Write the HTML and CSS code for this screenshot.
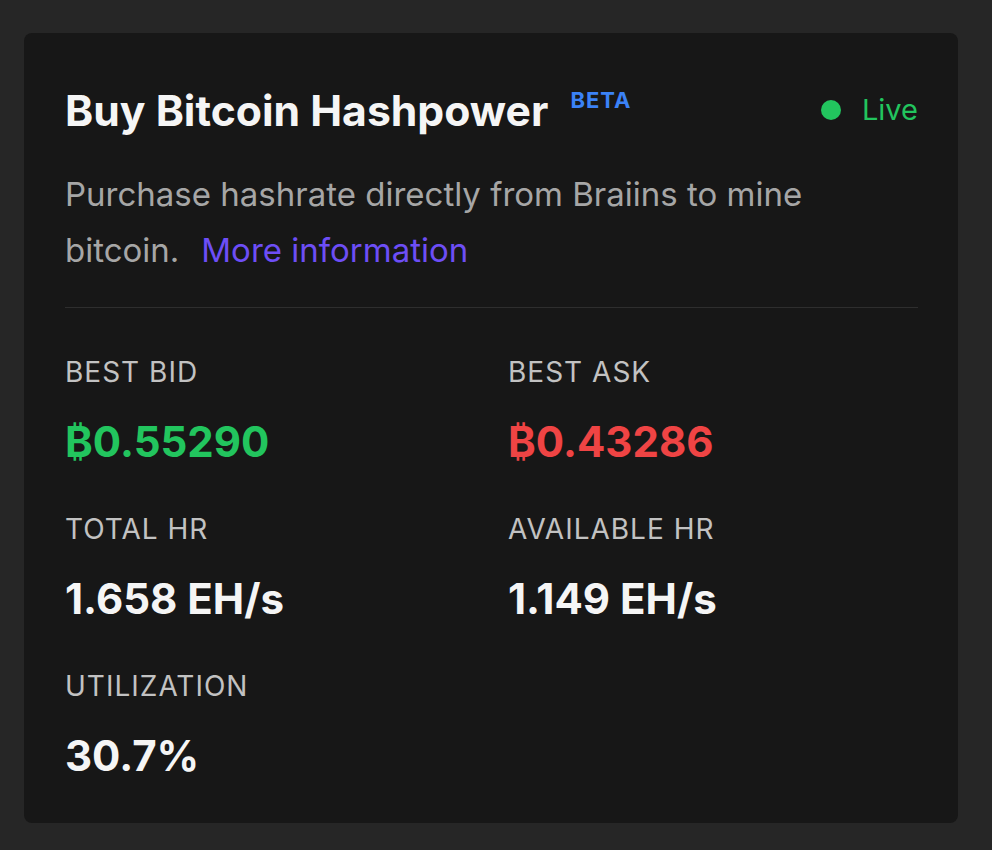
FILE: index.html
```html
<!DOCTYPE html>
<html>
<head>
<meta charset="utf-8">
<link rel="stylesheet" href="styles.css">
</head>
<body>
<div class="card">
  <div class="header">
    <h1 class="title">Buy Bitcoin Hashpower<span class="beta">BETA</span></h1>
    <div class="status"><span class="dot"></span><span class="live">Live</span></div>
  </div>
  <p class="desc">Purchase hashrate directly from Braiins to mine bitcoin.<a class="more" href="#">More information</a></p>
  <div class="divider"></div>
  <div class="stats">
    <div class="stat">
      <div class="label">BEST BID</div>
      <div class="value bid">₿0.55290</div>
    </div>
    <div class="stat">
      <div class="label">BEST ASK</div>
      <div class="value ask">₿0.43286</div>
    </div>
    <div class="stat">
      <div class="label">TOTAL HR</div>
      <div class="value">1.658 EH/s</div>
    </div>
    <div class="stat">
      <div class="label">AVAILABLE HR</div>
      <div class="value">1.149 EH/s</div>
    </div>
    <div class="stat">
      <div class="label">UTILIZATION</div>
      <div class="value">30.7%</div>
    </div>
  </div>
</div>
</body>
</html>
```

FILE: styles.css
```css
html, body {
  margin: 0;
  background: #262626;
}
body {
  padding: 33px 34px 0 24px;
  font-family: "Inter", "Noto Sans", sans-serif;
}
.card {
  background: #171717;
  border-radius: 8px;
  padding: 50px 40px 40px 41px;
  height: 790px;
  box-sizing: border-box;
}
.header {
  display: flex;
  justify-content: space-between;
  align-items: center;
}
.title {
  margin: 0;
  font-size: 42.7px;
  font-weight: 700;
  color: #f5f5f5;
  line-height: 56px;
  display: flex;
  align-items: flex-start;
}
.beta {
  font-size: 22px;
  font-weight: 700;
  color: #3b82f6;
  letter-spacing: 1px;
  margin-left: 22px;
  line-height: 30px;
  margin-top: 2px;
}
.status {
  display: flex;
  align-items: center;
  margin-top: -3px;
}
.dot {
  width: 20px;
  height: 20px;
  border-radius: 50%;
  background: #22c55e;
  margin-right: 21px;
}
.live {
  font-size: 29px;
  color: #22c55e;
}
.desc {
  margin: 27px 0 0;
  font-size: 33px;
  line-height: 56px;
  color: #a6a6a6;
}
.more {
  color: #6d4ef6;
  text-decoration: none;
  margin-left: 22px;
  display: inline-block;
}
.divider {
  border-top: 1px solid #2e2e2e;
  margin-top: 29px;
}
.stats {
  display: grid;
  grid-template-columns: 1fr 1fr;
  column-gap: 33px;
  row-gap: 39px;
  margin-top: 44px;
}
.label {
  font-size: 28px;
  color: #c2c2c2;
  letter-spacing: 1px;
  line-height: 40px;
}
.value {
  font-size: 42px;
  font-weight: 700;
  color: #f5f5f5;
  line-height: 56px;
  margin-top: 22px;
}
.bid { color: #22c55e; }
.ask { color: #ef4444; }
```
